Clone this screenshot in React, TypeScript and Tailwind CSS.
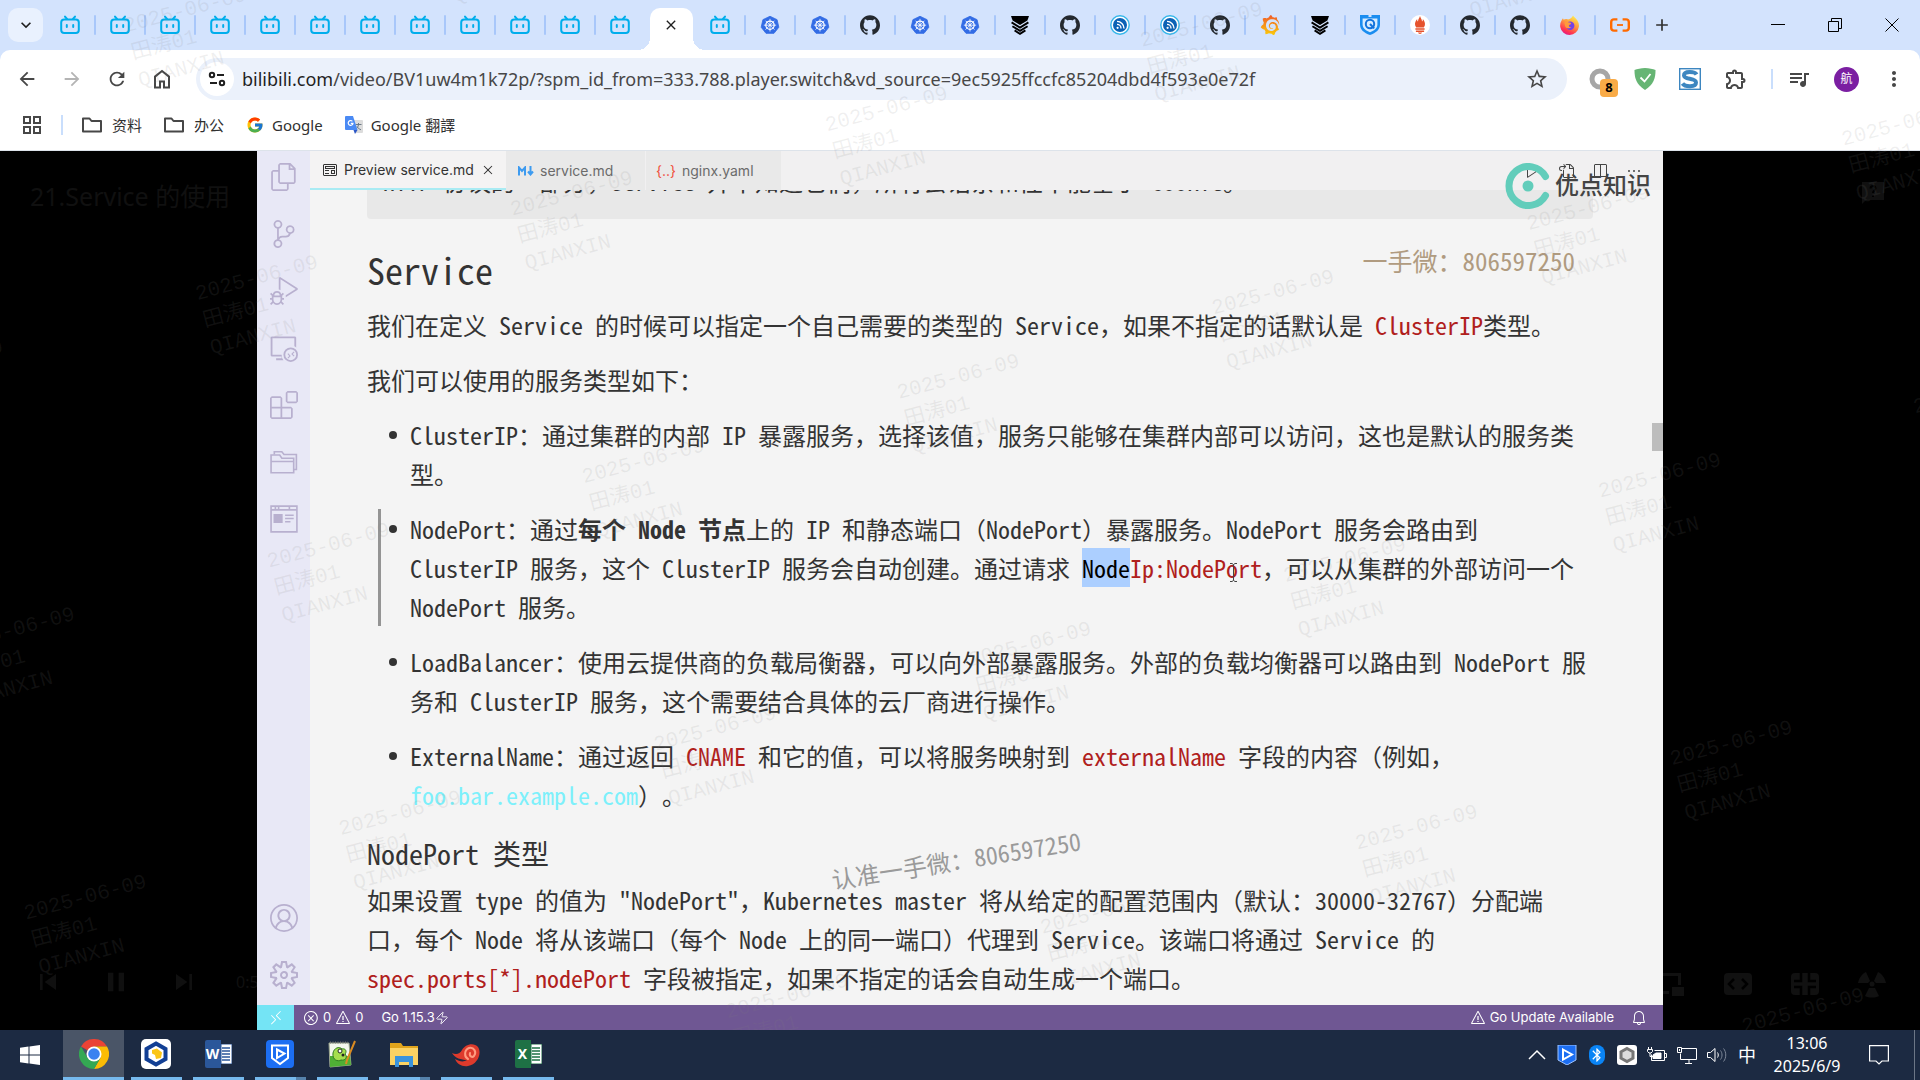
import React from 'react';
import { Zap } from 'lucide-react';
import { SiGithub, SiGrafana } from 'react-icons/si';
import { FcGoogle } from 'react-icons/fc';
import {
    MdArrowBack,
    MdArrowForward,
    MdRefresh,
    MdStarOutline,
    MdOutlineExtension,
    MdQueueMusic,
    MdMoreVert,
    MdKeyboardArrowDown,
    MdAdd,
    MdClose,
    MdSkipPrevious,
    MdSkipNext,
    MdPause,
    MdBluetooth,
} from 'react-icons/md';
import {
    VscFiles,
    VscSourceControl,
    VscDebugAlt,
    VscRemoteExplorer,
    VscExtensions,
    VscAccount,
    VscSettingsGear,
    VscError,
    VscWarning,
    VscBell,
    VscRemote,
    VscPreview,
    VscSplitHorizontal,
    VscPlay,
    VscGoToFile,
    VscClose,
    VscEllipsis,
} from 'react-icons/vsc';

type IconProps = { className?: string };

/* ---------- site icons ---------- */

const Bili = () => (
    <svg viewBox="0 0 20 20" className="w-5 h-5" fill="none" stroke="#00aeec" strokeWidth="2" strokeLinecap="round">
        <path d="M5 1.6 7 4M15 1.6 13 4" />
        <rect x="1.2" y="4.6" width="17.6" height="13.4" rx="3" />
        <path d="M6.8 10v2M13.2 10v2" />
    </svg>
);

const Kube = () => (
    <svg viewBox="0 0 24 24" className="w-5 h-5">
        <path d="M12 1.5 20.5 5.6 22.6 14.7 16.8 22H7.2L1.4 14.7 3.5 5.6Z" fill="#326ce5" stroke="#326ce5" strokeLinejoin="round" />
        <g fill="none" stroke="#fff" strokeWidth="1.5">
            <circle cx="12" cy="12.2" r="5" />
            <path d="M12 4.6v15.2M4.6 12.2h14.8M6.7 6.9l10.6 10.6M17.3 6.9 6.7 17.5" strokeWidth="1" />
        </g>
    </svg>
);

const Hub = () => <SiGithub className="w-5 h-5 text-[#24292f]" />;

const Layers = () => (
    <svg viewBox="0 0 20 20" className="w-5 h-5">
        <path d="M1 1h18l-1.6 4.6L10 10 2.6 5.6Z" fill="#000" />
        <path d="M1.6 7.4 10 12.6l8.4-5.2M2.4 11.2 10 15.8l7.6-4.6M4.6 15.4 10 18.8l5.4-3.4" fill="none" stroke="#000" strokeWidth="1.9" />
    </svg>
);

const Feed = () => (
    <svg viewBox="0 0 20 20" className="w-5 h-5" fill="none">
        <circle cx="10" cy="10" r="9.2" fill="#fff" stroke="#35b6ea" strokeWidth="1.4" />
        <circle cx="10" cy="10" r="7" fill="#0b62b5" />
        <path d="M7 9.4a4 4 0 0 1 4 4M7 6.4a7 7 0 0 1 7 7" stroke="#fff" strokeWidth="1.4" />
        <circle cx="7.6" cy="12.8" r="1.1" fill="#fff" />
    </svg>
);

const Grafana = () => (
    <>
        <svg width="0" height="0" className="absolute">
            <linearGradient id="grafana" x1="0" y1="0" x2="0" y2="1">
                <stop offset="0" stopColor="#f05a28" />
                <stop offset="1" stopColor="#fbca0a" />
            </linearGradient>
        </svg>
        <SiGrafana className="w-5 h-5" fill="url(#grafana)" />
    </>
);

const QShield = () => (
    <svg viewBox="0 0 20 20" className="w-5 h-5">
        <path d="M0 0h8.5v2h3V0H20v9.5c0 5-4 8.5-10 10.5C4 18 0 14.5 0 9.5Z" fill="#1a8df0" />
        <path d="M2.6 3.4h14.8v6.2c0 3.6-2.8 6-7.4 7.6-4.6-1.6-7.4-4-7.4-7.6Z" fill="#d6ecff" />
        <circle cx="10" cy="9" r="4.2" fill="none" stroke="#1273dc" strokeWidth="2" />
        <path d="m10 9 4.2 4.4" stroke="#1273dc" strokeWidth="2" />
    </svg>
);

const Prom = () => (
    <svg viewBox="0 0 20 20" className="w-5 h-5" fill="#e6522c">
        <circle cx="10" cy="10" r="10" fill="#fff" />
        <path d="M10 1c.6 2.4 2 3 2 5.4 1-.6.9-1.6.8-2.4 1.8 2 2.6 4.2 2 6.6l-1 1.8H6.2l-1-1.8c-.6-2.4.2-4.6 2-6.6-.1.8-.2 1.8.8 2.4C8 4 9.4 3.4 10 1Z" />
        <path d="M5.4 13.2h9.2v1.5H5.4zM5.9 15.5h8.2v1.5H5.9zM8 17.6h4c-.4 1-1 1.4-2 1.4s-1.6-.4-2-1.4Z" />
    </svg>
);

const Firefox = () => (
    <svg viewBox="0 0 20 20" className="w-5 h-5">
        <defs>
            <linearGradient id="fox" x1=".8" y1="0" x2=".3" y2="1">
                <stop offset="0" stopColor="#fff44f" />
                <stop offset=".45" stopColor="#ff9640" />
                <stop offset=".8" stopColor="#ff3750" />
                <stop offset="1" stopColor="#e31587" />
            </linearGradient>
        </defs>
        <path d="M13 .6c1 1.6 3 2.8 4.4 4.8a9.4 9.4 0 1 1-15.8.2c.3-1 .9-1.9 1.4-2.4l.6 1.6C5 3.8 6.8 4 8 4.4c2-.2 4-1.4 5-3.8Z" fill="url(#fox)" />
        <circle cx="10.2" cy="10.8" r="4.2" fill="#7542e5" />
        <path d="M4.4 7.6c1.6-1.4 3.4-1 4.6 0 1 .2 2.2.2 2.2.8 0 .8-1.6 1-2.2 1.8-.6 1 .6 2.4 2.4 1.8-1.8 2.4-6 1.4-6.4-1.2Z" fill="#ff9a3c" />
    </svg>
);

const Ali = () => (
    <svg viewBox="0 0 20 20" className="w-5 h-5" fill="none" stroke="#ff6a00" strokeWidth="2.4">
        <path d="M7.4 4.4H4A2.8 2.8 0 0 0 1.2 7v6A2.8 2.8 0 0 0 4 15.6h3.4M12.6 4.4H16A2.8 2.8 0 0 1 18.8 7v6a2.8 2.8 0 0 1-2.8 2.6h-3.4" />
        <path d="M7 10h6" strokeWidth="1.8" />
    </svg>
);

const tabsBefore = Array.from({ length: 12 }, () => Bili);
const tabsAfter = [
    Bili, Kube, Kube, Hub, Kube, Kube, Layers, Hub, Feed, Feed,
    Hub, Grafana, Layers, QShield, Prom, Hub, Hub, Firefox, Ali,
];

function MiniTab({ icon: Icon, divider = true }: { icon: React.ComponentType; divider?: boolean }) {
    return (
        <button className="flex h-full items-center" aria-label="Tab">
            <span className="flex w-12 justify-center"><Icon /></span>
            <span className={divider ? 'w-[2px] h-5 rounded bg-[#a8c7fa]' : 'w-[2px] h-5'} />
        </button>
    );
}

function TabStrip() {
    return (
        <div className="flex h-[50px] items-center bg-[#d3e3fd]">
            <button aria-label="Search tabs" className="ml-2 mr-[3px] flex w-[35px] h-[34px] items-center justify-center rounded-[10px] bg-[#e9f1fe]">
                <MdKeyboardArrowDown className="w-5 h-5 text-[#1f1f1f]" />
            </button>
            {tabsBefore.map((icon, i) => (
                <MiniTab key={i} icon={icon} divider={i < tabsBefore.length - 1} />
            ))}
            <div className="flex h-full w-[50px] items-end justify-center">
                <div className="relative flex h-[42px] w-[43px] items-center justify-center rounded-t-[10px] bg-white pb-2">
                    <button aria-label="Close tab"><MdClose className="w-4 h-4 text-[#1f1f1f]" /></button>
                    <span className="absolute bottom-0 -left-3 w-3 h-3 bg-[radial-gradient(circle_at_0_0,transparent_12px,#fff_12px)]" />
                    <span className="absolute bottom-0 -right-3 w-3 h-3 bg-[radial-gradient(circle_at_100%_0,transparent_12px,#fff_12px)]" />
                </div>
            </div>
            {tabsAfter.map((icon, i) => (
                <MiniTab key={i} icon={icon} />
            ))}
            <button aria-label="New tab" className="flex w-8 justify-center"><MdAdd className="w-5 h-5 text-[#303030]" /></button>
            <div className="ml-auto flex h-full text-black">
                <button aria-label="Minimize" className="flex w-[57px] items-center justify-center">
                    <svg viewBox="0 0 14 14" className="w-[14px] h-[14px]" stroke="currentColor"><path d="M0 6.5h14" /></svg>
                </button>
                <button aria-label="Restore" className="flex w-[57px] items-center justify-center">
                    <svg viewBox="0 0 14 14" className="w-[14px] h-[14px]" stroke="currentColor" fill="none"><path d="M.5 3.5h10v10H.5zM3.5 3.5v-3h10v10h-3" /></svg>
                </button>
                <button aria-label="Close" className="flex w-[57px] items-center justify-center">
                    <svg viewBox="0 0 14 14" className="w-[14px] h-[14px]" stroke="currentColor"><path d="m.5.5 13 13M13.5.5l-13 13" /></svg>
                </button>
            </div>
        </div>
    );
}

function Toolbar() {
    return (
        <div className="bg-[#d3e3fd]">
            <div className="flex items-center rounded-t-[10px] bg-white pt-2 pr-[14px] text-[#474747]">
                <div className="flex w-[196px] items-center pl-4">
                    <button aria-label="Back" className="w-[45px]"><MdArrowBack className="w-[22px] h-[22px]" /></button>
                    <button aria-label="Forward" className="w-[45px]"><MdArrowForward className="w-[22px] h-[22px] text-[#b4b4b4]" /></button>
                    <button aria-label="Reload" className="w-[45px]"><MdRefresh className="w-[22px] h-[22px]" /></button>
                    <button aria-label="Home">
                        <svg viewBox="0 0 22 22" className="w-[22px] h-[22px]" fill="none" stroke="currentColor" strokeWidth="2">
                            <path d="M4 19.5V8.6L11 3l7 5.6v10.9h-5v-6H9v6Z" />
                        </svg>
                    </button>
                </div>
                <div className="flex h-[42px] flex-1 items-center rounded-full bg-[#ebf1fb] pl-1 pr-[18px]">
                    <button aria-label="Site information" className="flex w-[34px] h-[34px] items-center justify-center rounded-full bg-white">
                        <svg viewBox="0 0 20 20" className="w-5 h-5" fill="none" stroke="#1f1f1f" strokeWidth="2">
                            <circle cx="5" cy="6" r="2.2" /><path d="M10 6h7M3 14h7" /><circle cx="15" cy="14" r="2.2" />
                        </svg>
                    </button>
                    <div className="ml-2 flex-1 whitespace-nowrap text-[18px] leading-6">
                        <span className="text-[#1f1f1f]">bilibili.com</span>/video/BV1uw4m1k72p/?spm_id_from=333.788.player.switch&amp;vd_source=9ec5925ffccfc85204dbd4f593e0e72f
                    </div>
                    <button aria-label="Bookmark"><MdStarOutline className="w-6 h-6" /></button>
                </div>
                <div className="flex items-center gap-[23px] pl-[22px]">
                    <button aria-label="Extension with 8 alerts" className="relative">
                        <svg viewBox="0 0 22 22" className="w-[22px] h-[22px]" fill="none" stroke="#a6a6a6" strokeWidth="5"><circle cx="11" cy="11" r="8" /></svg>
                        <span className="absolute -right-[7px] -bottom-[7px] flex w-[18px] h-[18px] items-center justify-center rounded bg-[#f9ab47] text-[13px] font-bold text-black">8</span>
                    </button>
                    <button aria-label="Ad blocker">
                        <svg viewBox="0 0 22 22" className="w-[22px] h-[22px]">
                            <path d="M11 0c4 0 8 1 10.5 2 0 8-1.5 14-10.5 20C2 16 .5 10 .5 2 3 1 7 0 11 0Z" fill="#66b574" />
                            <path d="m6.5 9.5 4 4 6-7.5" fill="none" stroke="#fff" strokeWidth="1.8" />
                        </svg>
                    </button>
                    <button aria-label="S extension" className="flex">
                        <svg viewBox="0 0 22 22" className="w-[22px] h-[22px]">
                            <rect x=".7" y=".7" width="20.6" height="20.6" fill="#fff" stroke="#3d86c0" strokeWidth="1.4" />
                            <path d="M17.5 6.5C16 3.5 5 2.5 5 7.5c0 4.5 12 2 12 7 0 5-11 4.5-13.5 1" fill="none" stroke="#3d86c0" strokeWidth="4" />
                        </svg>
                    </button>
                    <button aria-label="Extensions"><MdOutlineExtension className="w-6 h-6" /></button>
                    <span className="-mr-[9px] w-[2px] h-5 bg-[#c9defc]" />
                    <button aria-label="Media"><MdQueueMusic className="w-6 h-6" /></button>
                    <button className="flex w-[25px] h-[25px] items-center justify-center rounded-full bg-[#7b1fa2] text-[12px] text-white">航</button>
                    <button aria-label="Menu"><MdMoreVert className="w-6 h-6" /></button>
                </div>
            </div>
        </div>
    );
}

const Folder = () => (
    <svg viewBox="0 0 20 16" className="w-5 h-4" fill="none" stroke="#474747" strokeWidth="2">
        <path d="M1 14.5v-13h6.5l2 2.5H19v10.5Z" strokeLinejoin="round" />
    </svg>
);

function Bookmarks() {
    return (
        <nav className="flex h-[51px] items-center border-b border-[#dde3ea] bg-white pl-[22px] text-[15px] text-[#303030]">
            <button aria-label="Apps">
                <svg viewBox="0 0 20 20" className="w-5 h-5" fill="none" stroke="#474747" strokeWidth="2">
                    <path d="M2 2h6v6H2zM12 2h6v6h-6zM2 12h6v6H2zM12 12h6v6h-6z" />
                </svg>
            </button>
            <span className="mx-[19px] w-[2px] h-5 bg-[#c9defc]" />
            <div className="flex items-center gap-[22px]">
                <a href="#" className="flex items-center gap-[10px]"><Folder />资料</a>
                <a href="#" className="flex items-center gap-[10px]"><Folder />办公</a>
                <a href="#" className="flex items-center gap-2"><FcGoogle className="w-[18px] h-[18px]" />Google</a>
                <a href="#" className="flex items-center gap-2">
                    <svg viewBox="0 0 18 18" className="w-[18px] h-[18px]">
                        <path d="M8 4h9a1 1 0 0 1 1 1v11a1 1 0 0 1-1 1h-6Z" fill="#dcdcdc" />
                        <path d="M10.5 8.5h6M13.5 7v1.5c-.3 2.5-1.5 4-3 5M12 10.5c1 1.7 2.4 2.6 4 3.3" stroke="#6d7a86" fill="none" />
                        <path d="M1 0h7l4.5 14H1a1 1 0 0 1-1-1V1a1 1 0 0 1 1-1Z" fill="#4a8af4" />
                        <path d="M8.5 14h4L10 18Z" fill="#2a56c6" />
                        <path d="M7.4 5.3a2.4 2.4 0 1 0 .6 2H5.8" stroke="#fff" fill="none" strokeWidth="1.2" />
                    </svg>
                    Google 翻譯
                </a>
            </div>
        </nav>
    );
}

/* ---------- editor inside the video ---------- */

const FolderStack = ({ className }: IconProps) => (
    <svg viewBox="0 0 26 26" className={className} fill="none" stroke="currentColor" strokeWidth="1.5">
        <path d="M1 23V6.5h8l2 3h11V23ZM1 12.5h21" />
        <path d="M4 6V3.5h7l2 2.5h11.5v14H22" />
    </svg>
);

const BrowserPane = ({ className }: IconProps) => (
    <svg viewBox="0 0 26 26" className={className} fill="none" stroke="currentColor" strokeWidth="1.5">
        <path d="M1 1h24v24H1ZM1 4.5h24M5 1v3M8 1v3M18 1v3" />
        <path d="M4 9h7v7H4z" fill="currentColor" />
        <path d="M14 9.5h8M14 12.5h8M14 15.5h5" />
    </svg>
);

const activityIcons = [VscFiles, VscSourceControl, VscDebugAlt, VscRemoteExplorer, VscExtensions, FolderStack, BrowserPane];

function ActivityBar() {
    return (
        <aside className="flex w-[53px] flex-col items-center justify-between bg-[#e8e8f6] pt-3 pb-4 text-[#b8b0cf]">
            <div className="flex flex-col gap-[29px]">
                {activityIcons.map((Icon, i) => (
                    <button key={i} aria-label={`View ${i + 1}`}><Icon className="w-7 h-7" /></button>
                ))}
            </div>
            <div className="flex flex-col gap-[29px]">
                <button aria-label="Account"><VscAccount className="w-7 h-7" /></button>
                <button aria-label="Settings"><VscSettingsGear className="w-7 h-7" /></button>
            </div>
        </aside>
    );
}

function EditorTabs() {
    return (
        <div className="flex h-[39px] items-stretch bg-[#f1f0f1] text-[14px] text-[#6b6b6b]">
            <button className="flex w-[196px] items-center border-b-2 border-[#a9ebf3] bg-[#f4f3f3] pl-3 text-[#333]">
                <VscPreview className="mr-[6px] w-4 h-4" />
                <span className="flex-1 text-left">Preview service.md</span>
                <VscClose className="mr-[10px] w-4 h-4" />
            </button>
            <button className="flex w-[139px] items-center bg-[#e9e9e9] pl-3">
                <svg viewBox="0 0 16 10" className="mr-[6px] w-4 h-[10px]" fill="none" stroke="#3d9bf0" strokeWidth="2">
                    <path d="M1 9.5v-8l3 3.5 3-3.5v8M12.5 0v8M10 5.5l2.5 3 2.5-3" />
                </svg>
                service.md
            </button>
            <button className="flex w-[136px] items-center border-l border-[#f1f0f1] bg-[#e9e9e9] pl-[10px]">
                <span className="mr-[6px] text-[#f0503c]">{'{..}'}</span>
                nginx.yaml
            </button>
            <div className="ml-auto flex items-center gap-[18px] pr-[21px] text-[#444]">
                <button aria-label="Run"><VscPlay className="w-4 h-4" /></button>
                <button aria-label="Show source"><VscGoToFile className="w-4 h-4" /></button>
                <button aria-label="Split editor"><VscSplitHorizontal className="w-4 h-4" /></button>
                <button aria-label="More actions"><VscEllipsis className="w-4 h-4" /></button>
            </div>
        </div>
    );
}

function Code({ children }: { children: React.ReactNode }) {
    return <code className="font-[inherit] text-[#b0201c]">{children}</code>;
}

function Item({ children, marked }: { children: React.ReactNode; marked?: boolean }) {
    return (
        <li className={marked ? 'relative flex border-l-[3px] border-[#949494] -ml-8 pl-[29px]' : 'relative flex'}>
            <span className={marked ? 'absolute left-2 top-4 w-2 h-2 rounded-full bg-[#333]' : 'absolute -left-[21px] top-4 w-2 h-2 rounded-full bg-[#333]'} />
            <div>{children}</div>
        </li>
    );
}

function MarkdownPreview() {
    return (
        <article className="relative flex-1 overflow-hidden bg-[#f4f4f4] pl-[57px] pr-[70px] font-['Noto_Sans_Mono_CJK_SC','Noto_Sans_CJK_SC',monospace] text-[24px] leading-[39px] text-[#333] [text-spacing-trim:space-all]">
            <pre className="-mt-[29px] rounded-b bg-[#e8e8e8] pb-[19px] pl-4 font-[inherit]">HTTP 协议的一部分，Service 并不知道它们，所有会话亲和性不能基于 Cookie。</pre>
            <h2 className="mt-7 mb-[13px] text-[36px] leading-[45px]">Service</h2>
            <p>我们在定义 Service 的时候可以指定一个自己需要的类型的 Service，如果不指定的话默认是 <Code>ClusterIP</Code>类型。</p>
            <p className="mt-4">我们可以使用的服务类型如下：</p>
            <ul className="mt-4 flex flex-col gap-4 pl-[43px]">
                <Item>ClusterIP：通过集群的内部 IP 暴露服务，选择该值，服务只能够在集群内部可以访问，这也是默认的服务类型。</Item>
                <Item marked>
                    NodePort：通过<strong>每个 Node 节点</strong>上的 IP 和静态端口（NodePort）暴露服务。NodePort 服务会路由到 ClusterIP 服务，这个 ClusterIP 服务会自动创建。通过请求 <Code><span className="bg-[#accfff] py-[2px] text-black">Node</span>Ip:NodePort</Code>，可以从集群的外部访问一个 NodePort 服务。
                </Item>
                <Item>LoadBalancer：使用云提供商的负载局衡器，可以向外部暴露服务。外部的负载均衡器可以路由到 NodePort 服务和 ClusterIP 服务，这个需要结合具体的云厂商进行操作。</Item>
                <Item>
                    ExternalName：通过返回 <Code>CNAME</Code> 和它的值，可以将服务映射到 <Code>externalName</Code> 字段的内容（例如，<a href="#" className="whitespace-nowrap text-[#7df0fb]">foo.bar.example.com</a>）。
                </Item>
            </ul>
            <h3 className="mt-5 mb-2 text-[28px] leading-[38px]">NodePort 类型</h3>
            <p>如果设置 type 的值为 "NodePort"，Kubernetes master 将从给定的配置范围内（默认：30000-32767）分配端<br />口，每个 Node 将从该端口（每个 Node 上的同一端口）代理到 Service。该端口将通过 Service 的 <br /><Code>spec.ports[*].nodePort</Code> 字段被指定，如果不指定的话会自动生成一个端口。</p>

            {/* scroll thumb and captions burned into the video */}
            <span className="absolute right-0 top-[233px] w-[11px] h-7 bg-[#bdbdbd]" />
            <span className="absolute right-[88px] top-[51px] text-[25px] font-light text-[#b09b80]">一手微：806597250</span>
            <span className="absolute left-[520px] top-[650px] -rotate-9 font-light text-[#9a9a9a]">认准一手微：806597250</span>
            <svg viewBox="0 0 9 19" className="absolute left-[919px] top-[373px] w-[9px] h-[19px]" fill="none" stroke="#444">
                <path d="M1 .5h2l1.5 1 1.5-1h2M4.5 1.5v16M1 18.5h2l1.5-1 1.5 1h2" />
            </svg>
        </article>
    );
}

function StatusBar() {
    return (
        <footer className="flex h-[25px] items-center bg-[#6f5793] text-[13px] text-white">
            <button aria-label="Remote" className="flex h-full w-[37px] items-center justify-center bg-[#74e4f5]"><VscRemote className="w-4 h-4" /></button>
            <VscError className="ml-[9px] w-4 h-4" />
            <span className="ml-1">0</span>
            <VscWarning className="ml-1 w-4 h-4" />
            <span className="ml-1">0</span>
            <span className="ml-[18px]">Go 1.15.3</span>
            <Zap className="w-[14px] h-[14px]" strokeWidth={1.5} />
            <VscWarning className="ml-auto w-4 h-4" />
            <span className="ml-1">Go Update Available</span>
            <VscBell className="mr-4 ml-[17px] w-4 h-4" />
        </footer>
    );
}

function Editor() {
    return (
        <section className="relative flex min-w-0 flex-col font-['Inter','Noto_Sans_CJK_SC',sans-serif]">
            <div className="flex min-h-0 flex-1">
                <ActivityBar />
                <div className="flex min-w-0 flex-1 flex-col">
                    <EditorTabs />
                    <MarkdownPreview />
                </div>
            </div>
            <StatusBar />
            <div className="absolute top-3 right-3 flex items-center gap-1 text-[24px] leading-[46px] font-medium text-[#444]">
                <svg viewBox="0 0 46 46" className="w-[46px] h-[46px]" fill="none" stroke="#62cdbb">
                    <path d="M40.5 13.5A19.5 19.5 0 1 0 40.5 32.5" strokeWidth="7" strokeLinecap="round" />
                    <circle cx="23" cy="23" r="5.5" fill="#62cdbb" stroke="none" />
                </svg>
                优点知识
            </div>
        </section>
    );
}

function Player() {
    return (
        <main className="grid min-h-0 flex-1 grid-cols-[257fr_1406fr_257fr] bg-black">
            <div className="flex min-w-0 flex-col justify-between overflow-hidden pt-7 pb-8 text-[#101010]">
                <h1 className="pl-[30px] text-[25px] leading-[34px] whitespace-nowrap">21.Service 的使用</h1>
                <div className="flex items-center gap-9 pl-8 whitespace-nowrap">
                    <button aria-label="Previous"><MdSkipPrevious className="w-8 h-8" /></button>
                    <button aria-label="Pause"><MdPause className="w-8 h-8" /></button>
                    <button aria-label="Next"><MdSkipNext className="w-8 h-8" /></button>
                    <span className="text-[16px]">0:5</span>
                </div>
            </div>
            <Editor />
            <div className="flex min-w-0 flex-col justify-between overflow-hidden pt-7 pr-[34px] pb-8 text-[#111]">
                <button aria-label="Feedback" className="self-end">
                    <svg viewBox="0 0 26 26" className="w-[26px] h-[26px]">
                        <path d="M2 3h22v18H6l-4 4Z" fill="currentColor" />
                        <path d="M10.5 9.5c0-3.5 5-3.5 5 0 0 2-2.5 2-2.5 4.5M13 16v2" fill="none" stroke="#000" strokeWidth="2" />
                    </svg>
                </button>
                <div className="flex items-center justify-between">
                    <button aria-label="Picture in picture">
                        <svg viewBox="0 0 22 28" className="w-[22px] h-7" fill="currentColor"><path d="M0 3h18v12h-3V6H0zM9 17h12v9H9zM0 21h6v3H0z" /></svg>
                    </button>
                    <button aria-label="Wide screen">
                        <svg viewBox="0 0 28 28" className="w-7 h-7">
                            <rect x="0" y="3" width="28" height="22" rx="4" fill="currentColor" />
                            <path d="m10 9-5 5 5 5M18 9l5 5-5 5" fill="none" stroke="#000" strokeWidth="2.5" />
                        </svg>
                    </button>
                    <button aria-label="Web fullscreen">
                        <svg viewBox="0 0 28 28" className="w-7 h-7">
                            <rect x="0" y="3" width="28" height="22" rx="4" fill="currentColor" />
                            <path d="M10 3v8H3M18 3v8h7M10 25v-8H3M18 25v-8h7" fill="none" stroke="#000" strokeWidth="2.5" />
                        </svg>
                    </button>
                    <button aria-label="Fullscreen">
                        <svg viewBox="0 0 28 28" className="w-7 h-7" fill="currentColor">
                            <path d="M0 13C1 8 4 4 8 2l4 9-2 2ZM28 13c-1-5-4-9-8-11l-4 9 2 2ZM11 18h6l4 8c-4 2-10 2-14 0Z" />
                            <circle cx="14" cy="14" r="2.5" />
                        </svg>
                    </button>
                </div>
            </div>
        </main>
    );
}

/* ---------- windows taskbar ---------- */

const ChromeLogo = () => (
    <svg viewBox="0 0 30 30" className="w-[30px] h-[30px]">
        <path d="M15 15 2 7.5A15 15 0 0 1 28 7.5H15Z" fill="#ea4335" />
        <path d="M15 7.5h13A15 15 0 0 1 15 30l6.5-11.2Z" fill="#fbbc05" />
        <path d="M15 30A15 15 0 0 1 2 7.5l6.5 11.3L15 22.5l6.5-3.7Z" fill="#34a853" />
        <circle cx="15" cy="15" r="7.5" fill="#fff" />
        <circle cx="15" cy="15" r="5.8" fill="#3b82f0" />
    </svg>
);

const HexApp = () => (
    <svg viewBox="0 0 30 30" className="w-[30px] h-[30px]">
        <rect width="30" height="30" rx="5" fill="#fff" />
        <path d="M15 4.5 24.5 10v10L15 25.5 5.5 20V10Z" fill="none" stroke="#123f94" strokeWidth="4" />
        <path d="m11 11 5-1.5 5 4-1 5.5-5 1-1-4-3-1.5Z" fill="#fbc516" />
    </svg>
);

const OfficeApp = ({ letter, word }: { letter: string; word?: boolean }) => (
    <span className="flex items-center">
        <span className={word ? 'flex h-7 w-4 items-center justify-center rounded-l-[2px] bg-[#2b579a] text-[14px] font-bold text-white' : 'flex h-7 w-4 items-center justify-center rounded-l-[2px] bg-[#1e7145] text-[14px] font-bold text-white'}>{letter}</span>
        <svg viewBox="0 0 11 20" className={word ? 'w-[11px] h-5 text-[#2b579a]' : 'w-[11px] h-5 text-[#1e7145]'}>
            <path d="M0 0h11v20H0z" fill="#fff" stroke="currentColor" />
            <path d="M1 4h8M1 7h8M1 10h8M1 13h8M1 16h8" stroke="currentColor" strokeWidth="1.5" />
        </svg>
    </span>
);

const PlayShield = ({ className }: IconProps) => (
    <svg viewBox="0 0 28 28" className={className}>
        <rect width="28" height="28" rx="4" fill="#1c6ef2" />
        <path d="M6 5.5h16V18l-8 6-8-6Z" fill="none" stroke="#fff" strokeWidth="2" />
        <path d="m11 9.5 7.5 4-7.5 4.5Z" fill="none" stroke="#fff" strokeWidth="2" />
    </svg>
);

const NotepadApp = () => (
    <svg viewBox="0 0 28 28" className="w-7 h-7">
        <path d="M1 3h20l2 22-21 2Z" fill="#f4f7ee" stroke="#9aa58c" />
        <path d="M2 16h20l1 9-21 2Z" fill="#4faf35" />
        <path d="M5 13c1-5 6-7 9-4 4-1 5 3 3 5 3 3 0 7-4 6-3 2-9 0-8-7Z" fill="#a6df4e" stroke="#2f7a22" />
        <circle cx="12" cy="11" r="2" fill="#fff" stroke="#222" /><circle cx="15" cy="15" r="1.5" fill="#222" />
        <path d="M2 2.5h18" stroke="#777" strokeDasharray="1 1.5" strokeWidth="2" />
        <path d="m27 1-8 19-1 4" stroke="#d98a22" strokeWidth="2" fill="none" />
    </svg>
);

const ExplorerApp = () => (
    <svg viewBox="0 0 28 26" className="w-7 h-[26px]">
        <path d="M0 2h11l2 3h15v19H0Z" fill="#e0a41c" />
        <path d="M0 7h28v17H0Z" fill="#fbd263" />
        <path d="M5 26V15h18v11h-4v-5H9v5Z" fill="#3a93dc" />
    </svg>
);

const SwirlApp = () => (
    <svg viewBox="0 0 28 28" className="w-7 h-7" fill="none" strokeLinecap="round">
        <path d="M0 13c4 2 8 1 10-3 3-6 12-8 16-3 4 6 0 17-10 19-6 1-11-2-13-7 5 3 9 3 12 1-6 0-12-2-15-7Z" fill="#dd3a2c" />
        <path d="M16 19c-4-2-4-9 1-11 5-1 8 4 5 8-2 2-5 0-4-3" stroke="#ff9c80" strokeWidth="2" />
    </svg>
);

const apps = [
    { name: 'Chrome', icon: <ChromeLogo />, active: true },
    { name: 'Hex', icon: <HexApp /> },
    { name: 'Word', icon: <OfficeApp letter="W" word /> },
    { name: 'Shield', icon: <PlayShield className="w-7 h-7" />, stacked: true },
    { name: 'Notepad++', icon: <NotepadApp /> },
    { name: 'Explorer', icon: <ExplorerApp />, stacked: true },
    { name: 'Swirl', icon: <SwirlApp /> },
    { name: 'Excel', icon: <OfficeApp letter="X" /> },
];

function Taskbar() {
    return (
        <div className="flex h-[50px] shrink-0 items-stretch bg-[#1c2a42] text-white">
            <button aria-label="Start" className="flex w-[60px] items-center justify-center">
                <svg viewBox="0 0 20 20" className="w-5 h-5" fill="#fff"><path d="M0 2.8 8.5 1.6v7.9H0zM9.5 1.4 20 0v9.5H9.5zM0 10.5h8.5v7.9L0 17.2zM9.5 10.5H20V20L9.5 18.6z" /></svg>
            </button>
            <div className="flex pl-[3px]">
                {apps.map((app) => (
                    <button key={app.name} aria-label={app.name} className={app.active ? 'mr-px flex w-[61px] flex-col bg-[#4a5567]' : 'flex w-[62px] flex-col items-center'}>
                        <span className="flex flex-1 items-center justify-center self-stretch">{app.icon}</span>
                        <span className={app.active ? 'flex h-[3px] w-full bg-[#76b9ed]' : 'flex h-[3px] w-[51px] bg-[#76b9ed]'}>
                            {app.stacked && <span className="ml-auto w-[10px] bg-[#5682ab]" />}
                        </span>
                    </button>
                ))}
            </div>
            <div className="ml-auto flex items-center">
                <div className="flex items-center gap-[10px]">
                    <svg viewBox="0 0 20 20" className="w-5 h-5" fill="none" stroke="#fff" strokeWidth="1.5"><path d="m2 14 8-8 8 8" /></svg>
                    <svg viewBox="0 0 20 20" className="w-5 h-5">
                        <path d="M1 0h18v15l-9 5-9-5Z" fill="#1c6ef2" stroke="#9fc4ff" />
                        <path d="m6 4.5 9 5-9 5Z" fill="none" stroke="#fff" strokeWidth="2" />
                    </svg>
                    <span className="flex w-5 justify-center"><span className="flex h-5 w-4 items-center justify-center rounded-lg bg-[#0a84f5]"><MdBluetooth className="w-4 h-4" /></span></span>
                    <svg viewBox="0 0 20 20" className="w-5 h-5">
                        <rect width="20" height="20" rx="3" fill="#fff" />
                        <path d="m10 3.5 6 3.3v6.4l-6 3.3-6-3.3V6.8Z" fill="#ddd" stroke="#777" strokeWidth="3" />
                    </svg>
                    <svg viewBox="0 0 20 20" className="w-5 h-5" fill="none" stroke="#fff">
                        <path d="M4.5 9.5v6h13v-10h-10M17.5 8.5h2v4h-2" /><path d="M9 8h5v5.5H6V10z" fill="#fff" />
                        <path d="M1.5 2v2M4.5 2v2M.5 4.5h5v2L4 8H2L.5 6.5ZM3 8v3.5h3" />
                    </svg>
                    <svg viewBox="0 0 20 20" className="w-5 h-5" fill="none" stroke="#fff"><path d="M5 3.5h14.5v11H3.5v-6M12 15v3M8 18.5h7M.5 2.5h4v5h-4zM2.5 4v2" /></svg>
                    <svg viewBox="0 0 20 20" className="w-5 h-5" fill="none" stroke="#fff">
                        <path d="M.5 7.5h3L8 3.5v13l-4.5-4h-3Z" /><path d="M10.5 7.5c1 1.5 1 3.5 0 5" /><path d="M13.5 5.5c2 2.5 2 6.5 0 9M16.5 3.5c3 3.5 3 9.5 0 13" stroke="#7d8798" />
                    </svg>
                    <span className="w-5 text-center text-[18px] leading-5">中</span>
                </div>
                <time className="ml-2 w-[84px] text-center text-[16px] leading-[23px]">13:06<br />2025/6/9</time>
                <button aria-label="Notifications" className="ml-5 mr-[25px]">
                    <svg viewBox="0 0 20 20" className="w-5 h-5" fill="none" stroke="#fff" strokeWidth="1.2"><path d="M.6.6h18.8V16H13l-3 3-3-3H.6Z" /></svg>
                </button>
                <span className="mr-[5px] h-full w-px bg-[#6b7686]" />
            </div>
        </div>
    );
}

function Watermarks() {
    return (
        <div aria-hidden="true" className="pointer-events-none absolute inset-x-0 top-0 bottom-[50px] overflow-hidden">
            <div className="absolute top-0 left-0 origin-top-left -rotate-15">
                <div className="-ml-[213px] mt-[45px] grid grid-cols-[repeat(8,326px)] auto-rows-[277px] font-['Liberation_Mono','Noto_Sans_CJK_SC',monospace] text-[21px] leading-[28px] text-[#808080]/12">
                    {Array.from({ length: 48 }, (_, i) => (
                        <div key={i}>2025-06-09<br />田涛01<br />QIANXIN</div>
                    ))}
                </div>
            </div>
        </div>
    );
}

export default function App() {
    return (
        <div className="relative flex h-screen flex-col overflow-hidden bg-white font-['Noto_Sans','Noto_Sans_CJK_SC',sans-serif]">
            <header className="shrink-0">
                <TabStrip />
                <Toolbar />
                <Bookmarks />
            </header>
            <Player />
            <Taskbar />
            <Watermarks />
        </div>
    );
}
